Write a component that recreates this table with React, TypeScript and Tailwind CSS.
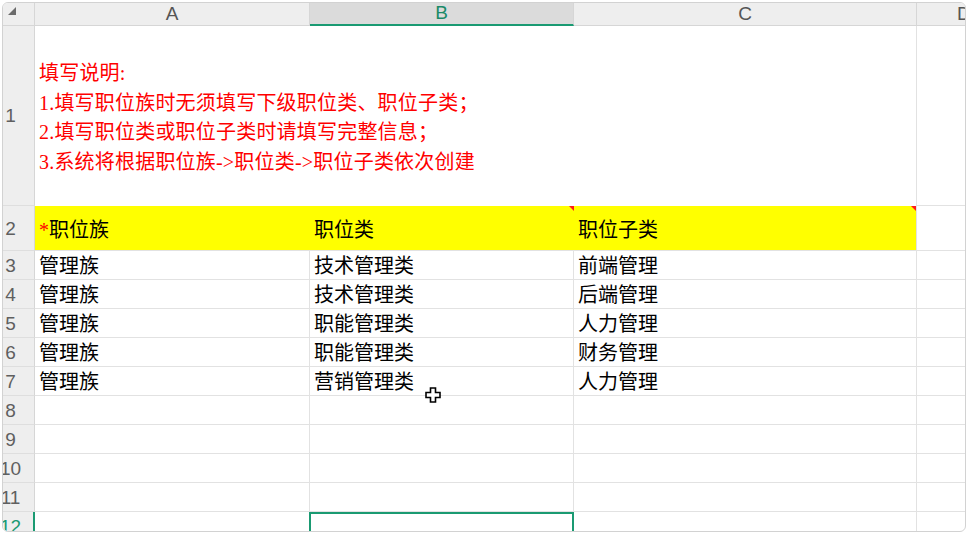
import React from "react";

const rows = [
  ["管理族", "技术管理类", "前端管理"],
  ["管理族", "技术管理类", "后端管理"],
  ["管理族", "职能管理类", "人力管理"],
  ["管理族", "职能管理类", "财务管理"],
  ["管理族", "营销管理类", "人力管理"],
  ["", "", ""],
  ["", "", ""],
  ["", "", ""],
  ["", "", ""],
  ["", "", ""],
];

const cellFont = { fontFamily: '"Liberation Serif", "Noto Sans CJK SC", serif' };
const uiFont = { fontFamily: '"Liberation Sans", Arial, sans-serif' };

function RowHead({ n, active }: { n: number; active?: boolean }) {
  return (
    <div
      className={`flex items-center bg-[#eeeeee] border-b border-[#dedede] ${
        active ? "border-r-2 border-r-[#1a9a72]" : "border-r border-r-[#d6d6d6]"
      }`}
    >
      <div
        className={`flex w-[15px] justify-center text-[19px] leading-none ${
          active ? "text-[#1a9a72]" : "text-[#5f5f5f]"
        }`}
        style={uiFont}
      >
        {n}
      </div>
    </div>
  );
}

function Corner() {
  return (
    <div className="absolute top-0 right-0 h-0 w-0 border-l-[5px] border-t-[5px] border-l-transparent border-t-[#ff1a1a]" />
  );
}

export default function App() {
  return (
    <div className="relative h-[534px] w-[968px] bg-white p-[2px]">
      <div className="h-[530px] w-[964px] overflow-hidden rounded-[6px] border border-[#d2d2d2]">
        <div className="grid grid-cols-[32px_275px_264px_343px_60px] grid-rows-[23px_180px_45px_repeat(10,29px)]">
          {/* header row */}
          <div className="relative bg-[#eeeeee] border-r border-b border-[#d6d6d6]">
            <svg className="absolute left-[4px] top-[3px]" width="10" height="10" viewBox="0 0 10 10">
              <path d="M1 9 L9 1 L9 9 Z" fill="#6b6b6b" />
            </svg>
          </div>
          <div className="flex items-center justify-center bg-[#eeeeee] border-r border-b border-[#d6d6d6] text-[19px] text-[#555555]" style={uiFont}>
            A
          </div>
          <div className="flex items-center justify-center bg-[#dbdbdb] border-r border-[#d6d6d6] border-b-2 border-b-[#1a9a72] text-[19px] text-[#1a8a68]" style={uiFont}>
            B
          </div>
          <div className="flex items-center justify-center bg-[#eeeeee] border-r border-b border-[#d6d6d6] text-[19px] text-[#555555]" style={uiFont}>
            C
          </div>
          <div className="flex items-center justify-start bg-[#eeeeee] border-b border-[#d6d6d6] pl-[40px] text-[19px] text-[#555555]" style={uiFont}>
            D
          </div>

          {/* row 1 */}
          <RowHead n={1} />
          <div className="col-span-3 flex flex-col justify-center border-r border-[#e2e2e2] pl-[4px] pt-[4px] text-[20px] leading-[29.5px] tracking-[0.2px] text-[#ff0000]" style={cellFont}>
            <div>填写说明:</div>
            <div>1.填写职位族时无须填写下级职位类、职位子类；</div>
            <div>2.填写职位类或职位子类时请填写完整信息；</div>
            <div>3.系统将根据职位族-&gt;职位类-&gt;职位子类依次创建</div>
          </div>
          <div className="border-b border-[#e2e2e2]" />

          {/* row 2 */}
          <RowHead n={2} />
          <div className="flex items-center bg-[#ffff00] border-b border-[#e2e2e2] pl-[4px] pt-[3px] text-[20px] text-black" style={cellFont}>
            <span className="text-[#ff0000]">*</span>职位族
          </div>
          <div className="relative flex items-center bg-[#ffff00] border-b border-[#e2e2e2] pl-[4px] pt-[3px] text-[20px] text-black" style={cellFont}>
            职位类
            <Corner />
          </div>
          <div className="relative flex items-center bg-[#ffff00] border-r border-b border-[#e2e2e2] pl-[4px] pt-[3px] text-[20px] text-black" style={cellFont}>
            职位子类
            <Corner />
          </div>
          <div className="border-b border-[#e2e2e2]" />

          {rows.map((r, i) => {
            const n = i + 3;
            const active = n === 12;
            return (
              <React.Fragment key={n}>
                <RowHead n={n} active={active} />
                {r.map((t, j) => (
                  <div
                    key={j}
                    className={`flex items-center pl-[4px] pt-[2px] text-[20px] text-black ${
                      active && j === 1
                        ? "border-2 border-[#1a9a72] -ml-[1px]"
                        : "border-r border-b border-[#e2e2e2]"
                    }`}
                    style={cellFont}
                  >
                    {t}
                  </div>
                ))}
                <div className="border-b border-[#e2e2e2]" />
              </React.Fragment>
            );
          })}
        </div>
      </div>

      {/* mouse cursor */}
      <svg className="absolute left-[425px] top-[387px]" width="16" height="16" viewBox="0 0 16 16">
        <path
          d="M5.5 1 H10.5 V5.5 H15 V10.5 H10.5 V15 H5.5 V10.5 H1 V5.5 H5.5 Z"
          fill="#ffffff"
          stroke="#000000"
          strokeWidth="1.6"
        />
      </svg>
    </div>
  );
}
